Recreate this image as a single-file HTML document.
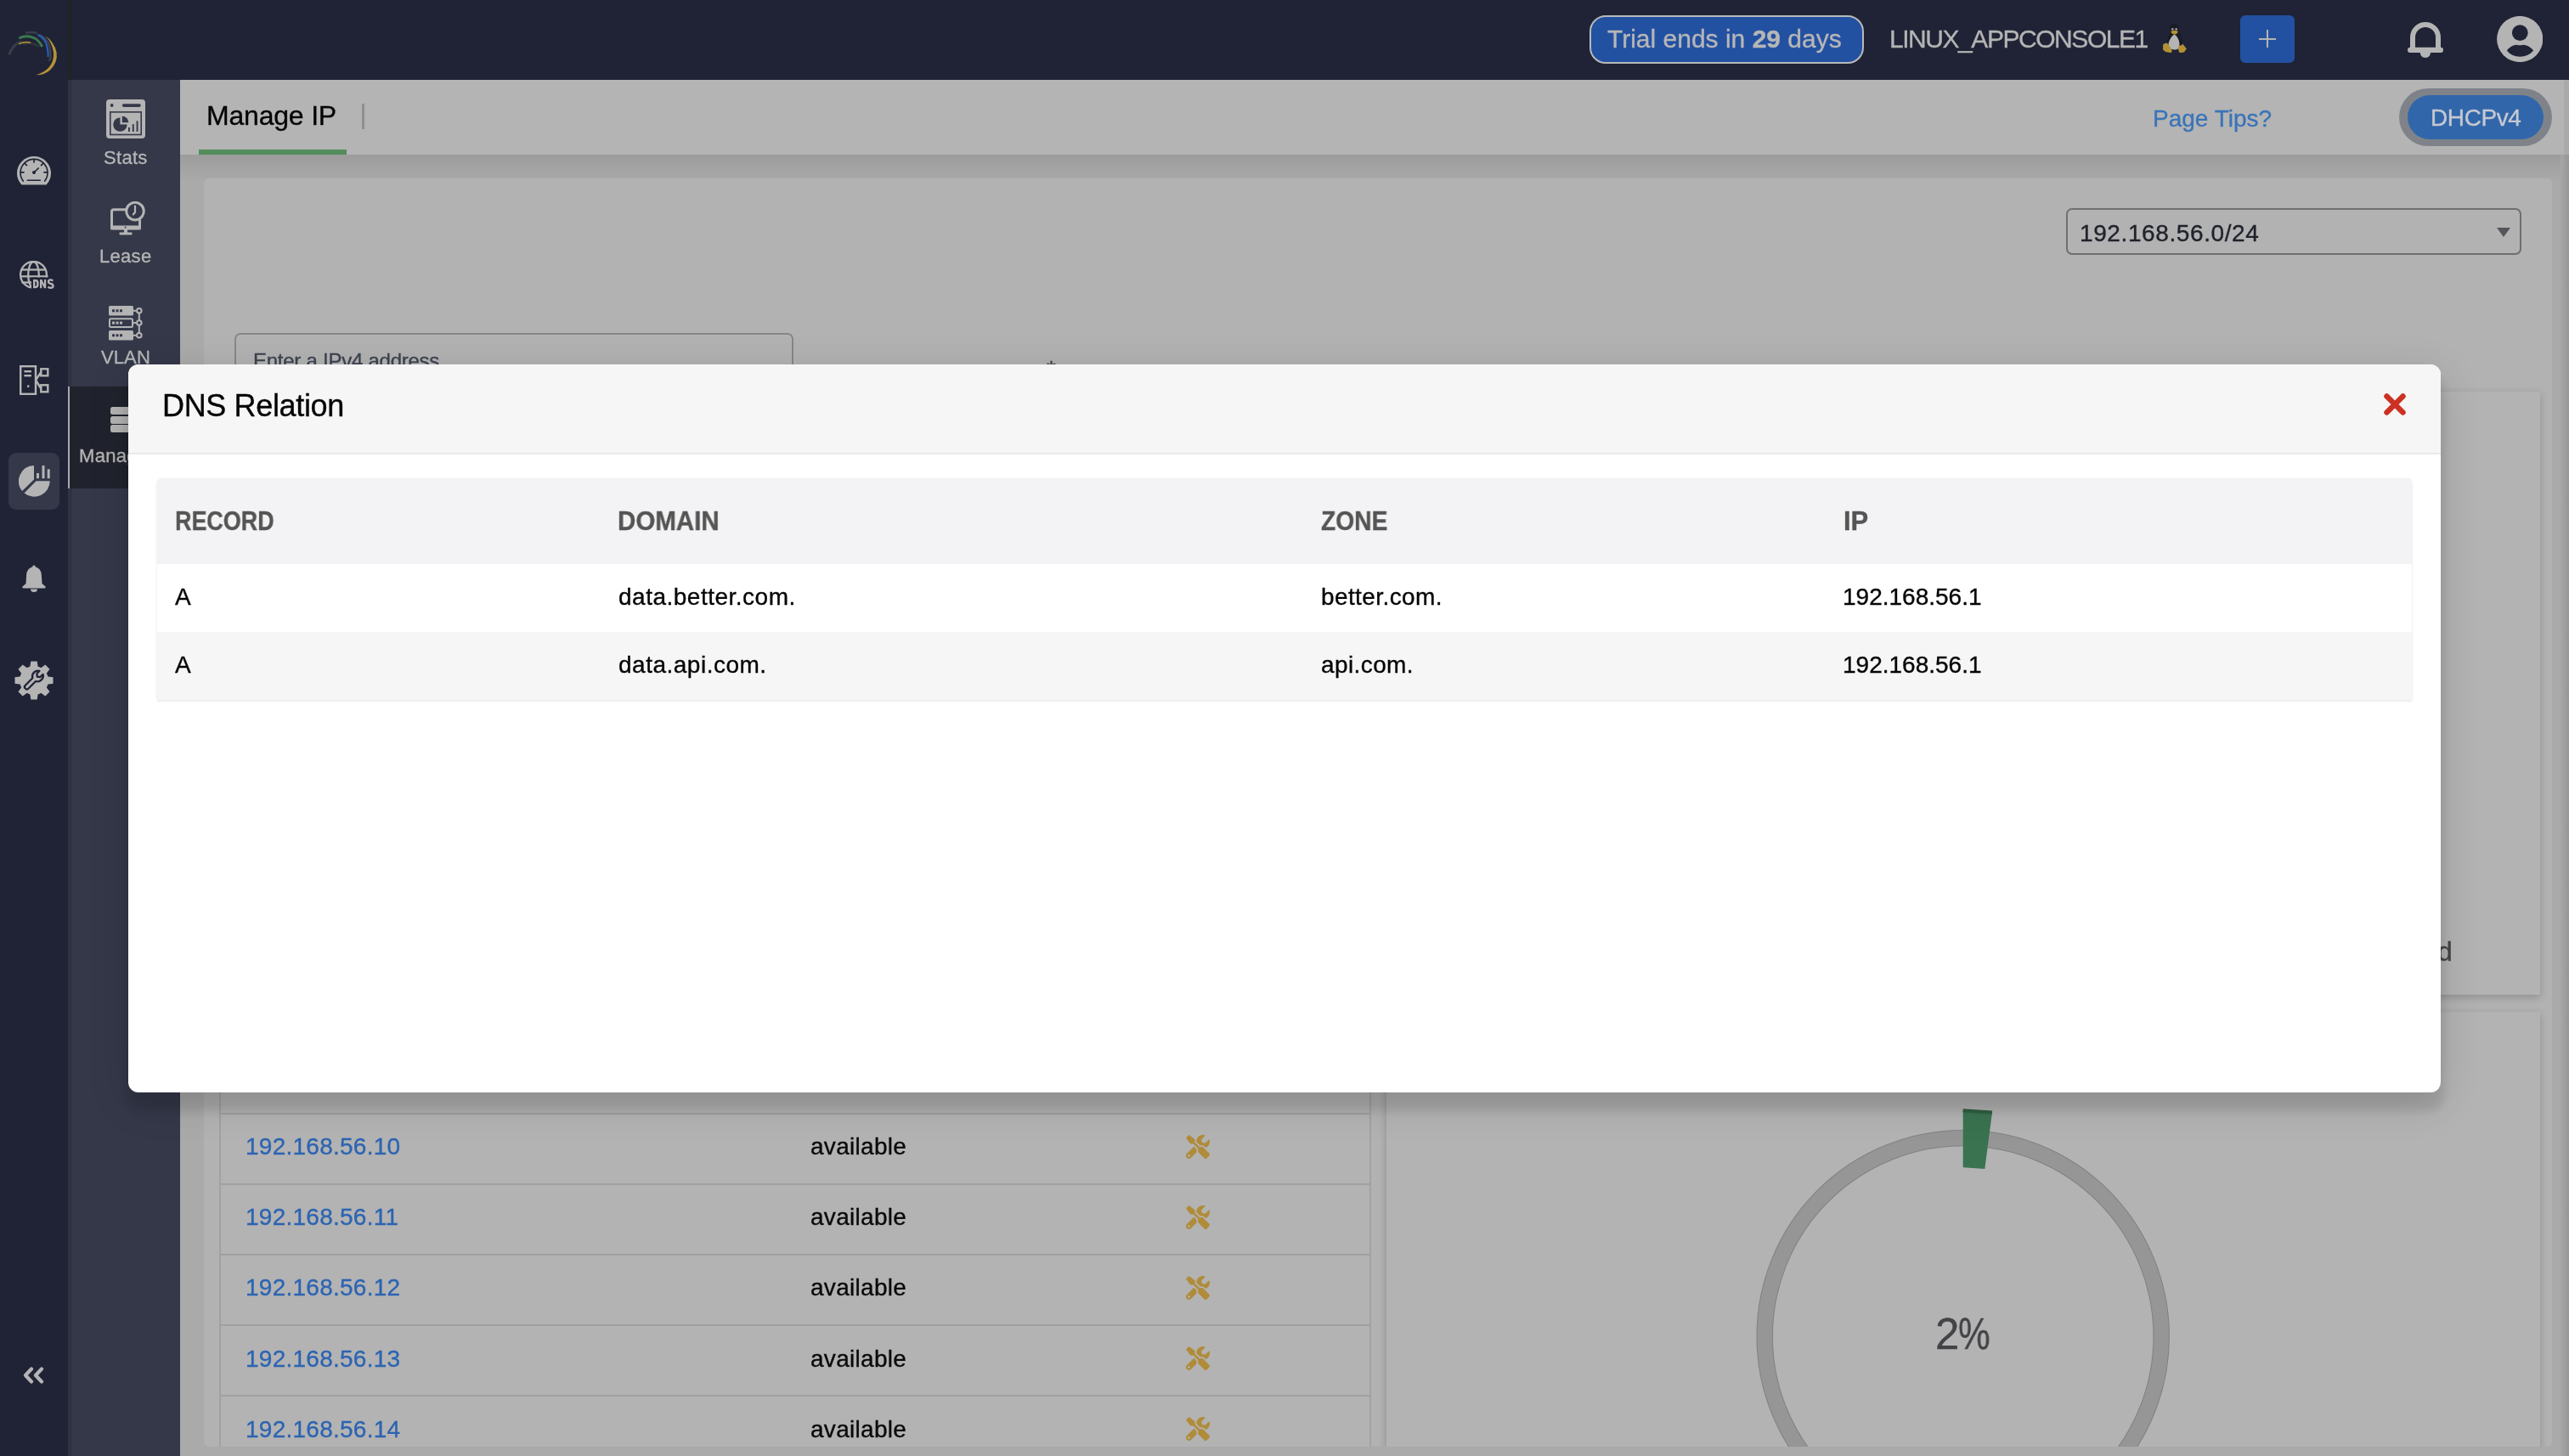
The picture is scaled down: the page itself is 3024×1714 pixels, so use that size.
<!DOCTYPE html>
<html><head><meta charset="utf-8"><title>Manage IP - DNS Relation</title>
<style>
html,body{margin:0;padding:0;width:3024px;height:1714px;overflow:hidden;background:#a9a9a9;}
body{position:relative;font-family:"Liberation Sans",sans-serif;}
.r{position:absolute;display:block;}
.t{position:absolute;line-height:1;white-space:pre;-webkit-text-stroke:0.35px currentColor;will-change:transform;}
</style></head><body>
<div class="r" style="left:0px;top:0px;width:3024px;height:1714px;background:#aaaaaa;"></div><div class="r" style="left:0px;top:0px;width:3024px;height:94px;background:#1f2335;"></div><div class="r" style="left:80px;top:0px;width:5px;height:94px;background:#212329;"></div><div class="r" style="left:0px;top:94px;width:80px;height:1620px;background:#1f2335;"></div><div class="r" style="left:80px;top:94px;width:132px;height:1620px;background:#343849;"></div><div class="r" style="left:80px;top:94px;width:5px;height:1620px;background:#2f3242;"></div><div class="r" style="left:212px;top:94px;width:2812px;height:88px;background:#b4b4b4;"></div><div class="r" style="left:212px;top:182px;width:2812px;height:30px;background:linear-gradient(#9c9c9c,#a9a9a9);"></div><div class="r" style="left:3014px;top:182px;width:10px;height:1532px;background:linear-gradient(90deg,#a7a7a7,#969696);"></div><div class="r" style="left:3018px;top:94px;width:6px;height:88px;background:#aaaaaa;"></div><div class="t" style="left:243px;top:120.4px;font-size:32px;color:#050505;font-weight:400;letter-spacing:-0.2px;">Manage IP</div><div class="r" style="left:426px;top:122px;width:3px;height:30px;background:#8f8f8f;"></div><div class="r" style="left:234px;top:176px;width:174px;height:6px;background:#538c5d;"></div><div class="t" style="left:2534px;top:126.4px;font-size:28px;color:#3a74b8;font-weight:400;letter-spacing:0px;">Page Tips?</div><div class="r" style="left:2824px;top:104px;width:180px;height:68px;background:#7f8389;border-radius:34px"></div><div class="r" style="left:2834px;top:112px;width:160px;height:52px;background:#3166aa;border-radius:26px"></div><div class="t" style="left:2861px;top:124.7px;font-size:28px;color:#c4c8d0;font-weight:400;letter-spacing:-0.4px;">DHCPv4</div><div class="r" style="left:240px;top:210px;width:2764px;height:1493px;background:#b2b2b2;border-radius:6px"></div><div class="r" style="left:2432px;top:245px;width:536px;height:55px;background:transparent;border:2px solid #6f6f6f;border-radius:7px;box-sizing:border-box"></div><div class="t" style="left:2448px;top:260.6px;font-size:28px;color:#20222c;font-weight:400;letter-spacing:0.6px;">192.168.56.0/24</div><svg class="r" style="left:2939px;top:268px;" width="16" height="11" viewBox="0 0 16 11"><path d="M0 0H16L8 11Z" fill="#55565c"/></svg><div class="r" style="left:276px;top:392px;width:658px;height:78px;background:transparent;border:2px solid #878787;border-radius:7px;box-sizing:border-box"></div><div class="t" style="left:297.8px;top:413.4px;font-size:24px;color:#3d4350;font-weight:400;letter-spacing:-0.25px;">Enter a IPv4 address</div><div class="t" style="left:1232px;top:421.2px;font-size:28px;color:#444;font-weight:400;letter-spacing:0px;">*</div><div class="r" style="left:1632px;top:461px;width:1358px;height:710px;background:#b3b3b3;box-shadow:0 3px 9px rgba(0,0,0,0.2)"></div><div class="t" style="left:2869px;top:1103.8px;font-size:32px;color:#45454a;font-weight:400;letter-spacing:0px;">d</div><div class="r" style="left:1632px;top:1191px;width:1358px;height:539px;background:#b3b3b3;box-shadow:0 3px 9px rgba(0,0,0,0.2)"></div><svg class="r" style="left:1632px;top:1191px;" width="1358" height="512" viewBox="0 0 1358 512"><circle cx="678.6999999999998" cy="382.20000000000005" r="233.5" fill="none" stroke="#7f8185" stroke-width="19.5"/><circle cx="678.6999999999998" cy="382.20000000000005" r="233.5" fill="none" stroke="#969696" stroke-width="17.5"/><path d="M678.7 116.2 L713.0 118.4 L704.3 184.9 L678.7 183.2Z" fill="#3a7350"/><path d="M678.7 116.2 L713.0 118.4" stroke="#2f5f42" stroke-width="4"/></svg><div class="t" style="left:2277.5px;top:1545.1px;font-size:51px;color:#434347;font-weight:400;letter-spacing:0px;">2</div><div class="t" style="left:2305px;top:1545.1px;font-size:51px;color:#434347;font-weight:400;letter-spacing:0px;transform:scaleX(0.83);transform-origin:0 0;">%</div><div class="r" style="left:258px;top:1150px;width:1356px;height:580px;background:#b3b3b3;border-left:2px solid #a2a2a2;border-right:2px solid #a2a2a2;box-sizing:border-box"></div><div class="r" style="left:258px;top:1310px;width:1356px;height:2px;background:#a0a0a0;"></div><div class="t" style="left:289px;top:1336.2px;font-size:28px;color:#2c64b2;font-weight:400;letter-spacing:0.25px;">192.168.56.10</div><div class="t" style="left:954px;top:1336.2px;font-size:28px;color:#0a0a0a;font-weight:400;letter-spacing:0.3px;">available</div><svg class="r" style="left:1396px;top:1336px;" width="28" height="28" viewBox="0 0 512 512"><path fill="#b08c3a" d="M501.1 395.7L384 278.6c-23.1-23.1-57.6-27.6-85.4-13.9L192 158.1V96L64 0 0 64l96 128h62.1l106.6 106.6c-13.6 27.8-9.2 62.3 13.9 85.4l117.1 117.1c14.6 14.6 38.2 14.6 52.7 0l52.7-52.7c14.5-14.6 14.5-38.2 0-52.7zM331.7 225c28.3 0 54.9 11 74.9 31l19.4 19.4c15.8-6.9 30.8-16.5 43.8-29.5 37.1-37.1 49.7-89.3 37.9-136.7-2.2-9-13.5-12.1-20.1-5.5l-74.4 74.4-67.9-11.3L334 98.9l74.4-74.4c6.6-6.6 3.4-17.9-5.7-20.2-47.4-11.7-99.6.9-136.6 37.9-28.5 28.5-41.9 66.1-41.2 103.6l82.1 82.1c8.1-1.9 16.5-2.9 24.7-2.9zm-103.9 82l-56.7-56.7L18.7 402.8c-25 25-25 65.5 0 90.5s65.5 25 90.5 0l123.6-123.6c-7.6-19.9-9.9-41.6-5-62.7zM64 472c-13.2 0-24-10.8-24-24 0-13.3 10.7-24 24-24s24 10.7 24 24c0 13.2-10.7 24-24 24z"/></svg><div class="r" style="left:258px;top:1393px;width:1356px;height:2px;background:#a0a0a0;"></div><div class="t" style="left:289px;top:1419.3px;font-size:28px;color:#2c64b2;font-weight:400;letter-spacing:0.25px;">192.168.56.11</div><div class="t" style="left:954px;top:1419.3px;font-size:28px;color:#0a0a0a;font-weight:400;letter-spacing:0.3px;">available</div><svg class="r" style="left:1396px;top:1419px;" width="28" height="28" viewBox="0 0 512 512"><path fill="#b08c3a" d="M501.1 395.7L384 278.6c-23.1-23.1-57.6-27.6-85.4-13.9L192 158.1V96L64 0 0 64l96 128h62.1l106.6 106.6c-13.6 27.8-9.2 62.3 13.9 85.4l117.1 117.1c14.6 14.6 38.2 14.6 52.7 0l52.7-52.7c14.5-14.6 14.5-38.2 0-52.7zM331.7 225c28.3 0 54.9 11 74.9 31l19.4 19.4c15.8-6.9 30.8-16.5 43.8-29.5 37.1-37.1 49.7-89.3 37.9-136.7-2.2-9-13.5-12.1-20.1-5.5l-74.4 74.4-67.9-11.3L334 98.9l74.4-74.4c6.6-6.6 3.4-17.9-5.7-20.2-47.4-11.7-99.6.9-136.6 37.9-28.5 28.5-41.9 66.1-41.2 103.6l82.1 82.1c8.1-1.9 16.5-2.9 24.7-2.9zm-103.9 82l-56.7-56.7L18.7 402.8c-25 25-25 65.5 0 90.5s65.5 25 90.5 0l123.6-123.6c-7.6-19.9-9.9-41.6-5-62.7zM64 472c-13.2 0-24-10.8-24-24 0-13.3 10.7-24 24-24s24 10.7 24 24c0 13.2-10.7 24-24 24z"/></svg><div class="r" style="left:258px;top:1476px;width:1356px;height:2px;background:#a0a0a0;"></div><div class="t" style="left:289px;top:1502.4px;font-size:28px;color:#2c64b2;font-weight:400;letter-spacing:0.25px;">192.168.56.12</div><div class="t" style="left:954px;top:1502.4px;font-size:28px;color:#0a0a0a;font-weight:400;letter-spacing:0.3px;">available</div><svg class="r" style="left:1396px;top:1502px;" width="28" height="28" viewBox="0 0 512 512"><path fill="#b08c3a" d="M501.1 395.7L384 278.6c-23.1-23.1-57.6-27.6-85.4-13.9L192 158.1V96L64 0 0 64l96 128h62.1l106.6 106.6c-13.6 27.8-9.2 62.3 13.9 85.4l117.1 117.1c14.6 14.6 38.2 14.6 52.7 0l52.7-52.7c14.5-14.6 14.5-38.2 0-52.7zM331.7 225c28.3 0 54.9 11 74.9 31l19.4 19.4c15.8-6.9 30.8-16.5 43.8-29.5 37.1-37.1 49.7-89.3 37.9-136.7-2.2-9-13.5-12.1-20.1-5.5l-74.4 74.4-67.9-11.3L334 98.9l74.4-74.4c6.6-6.6 3.4-17.9-5.7-20.2-47.4-11.7-99.6.9-136.6 37.9-28.5 28.5-41.9 66.1-41.2 103.6l82.1 82.1c8.1-1.9 16.5-2.9 24.7-2.9zm-103.9 82l-56.7-56.7L18.7 402.8c-25 25-25 65.5 0 90.5s65.5 25 90.5 0l123.6-123.6c-7.6-19.9-9.9-41.6-5-62.7zM64 472c-13.2 0-24-10.8-24-24 0-13.3 10.7-24 24-24s24 10.7 24 24c0 13.2-10.7 24-24 24z"/></svg><div class="r" style="left:258px;top:1559px;width:1356px;height:2px;background:#a0a0a0;"></div><div class="t" style="left:289px;top:1585.5px;font-size:28px;color:#2c64b2;font-weight:400;letter-spacing:0.25px;">192.168.56.13</div><div class="t" style="left:954px;top:1585.5px;font-size:28px;color:#0a0a0a;font-weight:400;letter-spacing:0.3px;">available</div><svg class="r" style="left:1396px;top:1585px;" width="28" height="28" viewBox="0 0 512 512"><path fill="#b08c3a" d="M501.1 395.7L384 278.6c-23.1-23.1-57.6-27.6-85.4-13.9L192 158.1V96L64 0 0 64l96 128h62.1l106.6 106.6c-13.6 27.8-9.2 62.3 13.9 85.4l117.1 117.1c14.6 14.6 38.2 14.6 52.7 0l52.7-52.7c14.5-14.6 14.5-38.2 0-52.7zM331.7 225c28.3 0 54.9 11 74.9 31l19.4 19.4c15.8-6.9 30.8-16.5 43.8-29.5 37.1-37.1 49.7-89.3 37.9-136.7-2.2-9-13.5-12.1-20.1-5.5l-74.4 74.4-67.9-11.3L334 98.9l74.4-74.4c6.6-6.6 3.4-17.9-5.7-20.2-47.4-11.7-99.6.9-136.6 37.9-28.5 28.5-41.9 66.1-41.2 103.6l82.1 82.1c8.1-1.9 16.5-2.9 24.7-2.9zm-103.9 82l-56.7-56.7L18.7 402.8c-25 25-25 65.5 0 90.5s65.5 25 90.5 0l123.6-123.6c-7.6-19.9-9.9-41.6-5-62.7zM64 472c-13.2 0-24-10.8-24-24 0-13.3 10.7-24 24-24s24 10.7 24 24c0 13.2-10.7 24-24 24z"/></svg><div class="r" style="left:258px;top:1642px;width:1356px;height:2px;background:#a0a0a0;"></div><div class="t" style="left:289px;top:1668.6px;font-size:28px;color:#2c64b2;font-weight:400;letter-spacing:0.25px;">192.168.56.14</div><div class="t" style="left:954px;top:1668.6px;font-size:28px;color:#0a0a0a;font-weight:400;letter-spacing:0.3px;">available</div><svg class="r" style="left:1396px;top:1668px;" width="28" height="28" viewBox="0 0 512 512"><path fill="#b08c3a" d="M501.1 395.7L384 278.6c-23.1-23.1-57.6-27.6-85.4-13.9L192 158.1V96L64 0 0 64l96 128h62.1l106.6 106.6c-13.6 27.8-9.2 62.3 13.9 85.4l117.1 117.1c14.6 14.6 38.2 14.6 52.7 0l52.7-52.7c14.5-14.6 14.5-38.2 0-52.7zM331.7 225c28.3 0 54.9 11 74.9 31l19.4 19.4c15.8-6.9 30.8-16.5 43.8-29.5 37.1-37.1 49.7-89.3 37.9-136.7-2.2-9-13.5-12.1-20.1-5.5l-74.4 74.4-67.9-11.3L334 98.9l74.4-74.4c6.6-6.6 3.4-17.9-5.7-20.2-47.4-11.7-99.6.9-136.6 37.9-28.5 28.5-41.9 66.1-41.2 103.6l82.1 82.1c8.1-1.9 16.5-2.9 24.7-2.9zm-103.9 82l-56.7-56.7L18.7 402.8c-25 25-25 65.5 0 90.5s65.5 25 90.5 0l123.6-123.6c-7.6-19.9-9.9-41.6-5-62.7zM64 472c-13.2 0-24-10.8-24-24 0-13.3 10.7-24 24-24s24 10.7 24 24c0 13.2-10.7 24-24 24z"/></svg><div class="r" style="left:212px;top:1703px;width:2802px;height:11px;background:#aaaaaa;"></div><svg class="r" style="left:125px;top:117px;" width="46" height="46" viewBox="0 0 46 46"><rect x="0" y="0" width="46" height="46" rx="4" fill="#b4b4b4"/><circle cx="6.7" cy="7" r="1.9" fill="#343849"/><rect x="18.8" y="5.3" width="22" height="3.6" rx="1.8" fill="#343849"/><rect x="4.8" y="14.9" width="36.4" height="26.6" fill="none" stroke="#343849" stroke-width="1.6"/><path d="M16.4 21.4 A8.2 8.2 0 1 0 24.6 29.6 L16.4 29.6Z" fill="#343849"/><path d="M18.8 19.7 A7.6 7.6 0 0 1 26.4 27.3 L18.8 27.3Z" fill="#343849"/><rect x="26" y="33" width="1.9" height="5" fill="#343849"/><rect x="30.8" y="29.2" width="1.9" height="8.8" fill="#343849"/><rect x="35.6" y="25.4" width="1.9" height="12.6" fill="#343849"/></svg><div class="t" style="left:122px;top:175.3px;font-size:22px;color:#b4b4b4;font-weight:400;letter-spacing:0.3px;">Stats</div><svg class="r" style="left:130px;top:237px;" width="42" height="41" viewBox="0 0 42 41"><rect x="1.5" y="9.7" width="33" height="22" rx="2.5" fill="none" stroke="#b4b4b4" stroke-width="3"/><rect x="0" y="28.5" width="36" height="5" rx="1.5" fill="#b4b4b4"/><circle cx="17.6" cy="30.4" r="1" fill="#343849"/><rect x="16" y="33" width="4" height="4" fill="#b4b4b4"/><rect x="10.5" y="36.4" width="15" height="3" rx="1.2" fill="#b4b4b4"/><circle cx="29" cy="11.6" r="10.3" fill="#343849" stroke="#b4b4b4" stroke-width="3"/><path d="M29 5.5 V12.8 L26.8 15.5" fill="none" stroke="#b4b4b4" stroke-width="2.2" stroke-linecap="round"/></svg><div class="t" style="left:117px;top:290.5px;font-size:22px;color:#b4b4b4;font-weight:400;letter-spacing:0.3px;">Lease</div><svg class="r" style="left:128px;top:360px;" width="40" height="41" viewBox="0 0 40 41"><rect x="0" y="0" width="29" height="11.5" rx="1.5" fill="#b4b4b4"/><rect x="4" y="4.3" width="3" height="3" fill="#343849"/><rect x="8.5" y="4.3" width="3" height="3" fill="#343849"/><rect x="13" y="4.3" width="3" height="3" fill="#343849"/><rect x="28" y="4.8" width="4" height="2" fill="#b4b4b4"/><circle cx="35.8" cy="5.7" r="2.8" fill="#343849" stroke="#b4b4b4" stroke-width="2"/><rect x="1" y="15.3" width="27" height="9.7" rx="1.5" fill="none" stroke="#b4b4b4" stroke-width="2"/><rect x="4" y="18.6" width="3" height="3" fill="#b4b4b4"/><rect x="8.5" y="18.6" width="3" height="3" fill="#b4b4b4"/><rect x="13" y="18.6" width="3" height="3" fill="#b4b4b4"/><rect x="28" y="19.1" width="4" height="2" fill="#b4b4b4"/><circle cx="35.8" cy="20.0" r="2.8" fill="#343849" stroke="#b4b4b4" stroke-width="2"/><rect x="0" y="29" width="29" height="11.5" rx="1.5" fill="#b4b4b4"/><rect x="4" y="33.3" width="3" height="3" fill="#343849"/><rect x="8.5" y="33.3" width="3" height="3" fill="#343849"/><rect x="13" y="33.3" width="3" height="3" fill="#343849"/><rect x="28" y="33.8" width="4" height="2" fill="#b4b4b4"/><circle cx="35.8" cy="34.7" r="2.8" fill="#343849" stroke="#b4b4b4" stroke-width="2"/><rect x="34.8" y="8.5" width="2" height="9" fill="#b4b4b4"/><rect x="34.8" y="23" width="2" height="9" fill="#b4b4b4"/></svg><div class="t" style="left:119px;top:410.3px;font-size:22px;color:#b4b4b4;font-weight:400;letter-spacing:0.1px;">VLAN</div><div class="r" style="left:80px;top:455px;width:132px;height:120px;background:#20232d;"></div><div class="r" style="left:80px;top:455px;width:2px;height:120px;background:#a9a9a9;"></div><div class="r" style="left:130px;top:479px;width:45px;height:9px;background:#b4b4b4;border-radius:2.5px"></div><div class="r" style="left:130px;top:490px;width:45px;height:9px;background:#b4b4b4;border-radius:2.5px"></div><div class="r" style="left:130px;top:500px;width:45px;height:9px;background:#b4b4b4;border-radius:2.5px"></div><div class="t" style="left:92.6px;top:526.3px;font-size:22px;color:#b4b4b4;font-weight:400;letter-spacing:0.3px;">Manage</div><svg class="r" style="left:0px;top:0px;" width="80" height="94" viewBox="0 0 80 94"><path d="M10.7 64.5 Q14.5 53 24.7 48.8" fill="none" stroke="#3a3d48" stroke-width="3"/><path d="M30 38.8 Q37 37 44 39.2" fill="none" stroke="#3b3f4c" stroke-width="2.6"/><path d="M46 40.8 Q54 44 57.5 52 Q60 58 59.5 68 L57.5 72" fill="none" stroke="#3e4350" stroke-width="2.2"/><path d="M22.2 44.9 Q33 40 42.8 46.1 Q47 49.5 49.8 55" fill="none" stroke="#3a7a4c" stroke-width="2.8"/><path d="M27 52 Q38 49 46 55" fill="none" stroke="#33363f" stroke-width="2.5"/><path d="M44.3 41 Q51 44 53.8 50 Q57 57.5 56.6 67" fill="none" stroke="#2a5fbb" stroke-width="2.1"/><path d="M22.2 51.8 Q29 48.5 36.2 50.3" fill="none" stroke="#a88a3a" stroke-width="1.6"/><path d="M53.5 42.3 Q63.5 49 66.6 61.5 Q68.3 74 58.5 83 Q51 88.8 42.5 88.2 Q51 85.8 57 80 Q63.8 72.5 63 62 Q61.5 50.5 53.5 42.3 Z" fill="#b4923a"/></svg><svg class="r" style="left:20px;top:183px;" width="40" height="36" viewBox="0 0 40 36"><path d="M5.4 34.6 A20 20 0 1 1 34.6 34.6 Z" fill="#b4b4b4"/><path d="M7.4 30.2 A16 16 0 1 1 32.6 30.2" fill="none" stroke="#1f2335" stroke-width="1.6" stroke-linecap="round"/><g stroke="#1f2335" stroke-width="1.7" stroke-linecap="round"><path d="M20 4.5 V8"/><path d="M8.8 9 L11.5 11.6"/><path d="M31.2 9 L28.5 11.6"/><path d="M4.5 19.8 H8"/><path d="M35.5 19.8 H32"/></g><path d="M20 20 L25.2 15" stroke="#1f2335" stroke-width="1.7" stroke-linecap="round"/><circle cx="20" cy="20" r="2" fill="#1f2335"/><path d="M12.4 29.2 H27.4" stroke="#1f2335" stroke-width="1.6" stroke-linecap="round"/></svg><svg class="r" style="left:23px;top:307px;" width="42" height="36" viewBox="0 0 42 36"><g fill="none" stroke="#b4b4b4" stroke-width="2.3"><circle cx="16.5" cy="16.4" r="15.4"/><ellipse cx="16.5" cy="16.4" rx="6.3" ry="15.4"/><path d="M2.5 10.5 H30.5"/><path d="M1 18.3 H33.5"/><path d="M2.5 25.5 H30.5"/></g><rect x="14" y="19.6" width="28" height="17" fill="#1f2335"/><path fill-rule="evenodd" fill="#b4b4b4" d="M16 22 H19 Q22.7 22 22.7 27 Q22.7 32.2 19 32.2 H16 Z M18.4 24.2 H18.9 Q20.3 24.2 20.3 27 Q20.3 30 18.9 30 H18.4 Z"/><path fill="#b4b4b4" d="M24 22 H26.3 L29 27.5 V22 H31.2 V32.2 H29 L26.3 26.7 V32.2 H24 Z"/><path d="M39.3 23.6 Q38.2 22.4 36.6 22.4 Q34 22.4 34 24.8 Q34 26.4 36.6 27 Q39.5 27.6 39.5 29.5 Q39.5 31.9 36.7 31.9 Q34.9 31.9 33.7 30.6" fill="none" stroke="#b4b4b4" stroke-width="2.3"/></svg><svg class="r" style="left:23px;top:430px;" width="35" height="36" viewBox="0 0 35 36"><rect x="1.2" y="1.2" width="17.8" height="32.6" fill="none" stroke="#b4b4b4" stroke-width="2.4"/><rect x="5.4" y="6" width="8.5" height="2.4" fill="#b4b4b4"/><rect x="5.4" y="11" width="8.5" height="2.4" fill="#b4b4b4"/><rect x="9" y="23.5" width="2.4" height="2.4" fill="#b4b4b4"/><rect x="25.3" y="4.3" width="8" height="8" fill="none" stroke="#b4b4b4" stroke-width="2.4"/><rect x="25.3" y="23.3" width="8" height="8" fill="none" stroke="#b4b4b4" stroke-width="2.4"/><path d="M19 17.5 L25 8.5 M19 17.5 L25 27" fill="none" stroke="#b4b4b4" stroke-width="2.4"/></svg><div class="r" style="left:10px;top:533px;width:60px;height:67px;background:#343849;border-radius:9px"></div><svg class="r" style="left:22px;top:548px;" width="38" height="38" viewBox="0 0 38 38"><path d="M18 0 A18.5 18.5 0 0 0 4 30 L18 16.5 Z" fill="#b4b4b4"/><path d="M36.7 18.3 A18.5 18.5 0 0 1 6.5 32.5 L20.5 18.3 Z" fill="#b4b4b4"/><rect x="21" y="9" width="3" height="6.2" fill="#b4b4b4"/><rect x="27.5" y="0" width="3" height="15.2" fill="#b4b4b4"/><rect x="33.7" y="4.3" width="3" height="10.9" fill="#b4b4b4"/></svg><svg class="r" style="left:26px;top:665px;" width="28" height="33" viewBox="0 0 28 33"><path d="M14 0.5 a1.6 1.6 0 0 1 1.6 1.8 C21 4 23 8 23 14 L23.5 22 L27.5 25.5 A1.3 1.3 0 0 1 26.5 27.5 H1.5 A1.3 1.3 0 0 1 0.5 25.5 L4.5 22 L5 14 C5 8 7 4 12.4 2.3 A1.6 1.6 0 0 1 14 0.5Z" fill="#b4b4b4"/><path d="M10 28.5 H18 A4 3.5 0 0 1 10 28.5Z" fill="#b4b4b4"/></svg><svg class="r" style="left:17px;top:778px;" width="46" height="46" viewBox="0 0 46 46"><path d="M18.2 8 L19.3 0.5 H26.7 L27.8 8 Z" fill="#b4b4b4" transform="rotate(0 23 23)"/><path d="M18.2 8 L19.3 0.5 H26.7 L27.8 8 Z" fill="#b4b4b4" transform="rotate(45 23 23)"/><path d="M18.2 8 L19.3 0.5 H26.7 L27.8 8 Z" fill="#b4b4b4" transform="rotate(90 23 23)"/><path d="M18.2 8 L19.3 0.5 H26.7 L27.8 8 Z" fill="#b4b4b4" transform="rotate(135 23 23)"/><path d="M18.2 8 L19.3 0.5 H26.7 L27.8 8 Z" fill="#b4b4b4" transform="rotate(180 23 23)"/><path d="M18.2 8 L19.3 0.5 H26.7 L27.8 8 Z" fill="#b4b4b4" transform="rotate(225 23 23)"/><path d="M18.2 8 L19.3 0.5 H26.7 L27.8 8 Z" fill="#b4b4b4" transform="rotate(270 23 23)"/><path d="M18.2 8 L19.3 0.5 H26.7 L27.8 8 Z" fill="#b4b4b4" transform="rotate(315 23 23)"/><circle cx="23" cy="23" r="17" fill="#b4b4b4"/><path d="M29.5 11.8 A6.8 6.8 0 0 0 21.3 20.3 L12.8 28.8 A2.6 2.6 0 0 0 16.5 32.5 L25 24 A6.8 6.8 0 0 0 33.6 15.8 L30.3 19 L26.8 18.6 L26.4 15 Z" fill="none" stroke="#1f2335" stroke-width="2.3" stroke-linejoin="round"/></svg><svg class="r" style="left:27px;top:1609px;" width="26" height="21" viewBox="0 0 26 21"><path d="M10 2.5 L3 10 L10 17.5 M22 2.5 L15 10 L22 17.5" fill="none" stroke="#b4b4b4" stroke-width="4.2" stroke-linecap="round" stroke-linejoin="round"/></svg><div class="r" style="left:1871px;top:18px;width:323px;height:57px;background:#2351a1;border:2px solid #b9b9b9;border-radius:19px;box-sizing:border-box"></div><div class="t" style="left:1892px;top:31.2px;font-size:30px;color:#b6b6b8;font-weight:400;letter-spacing:0px;">Trial ends in <b>29</b> days</div><div class="t" style="left:2224px;top:31.2px;font-size:30px;color:#b4b4b4;font-weight:400;letter-spacing:-1.45px;">LINUX_APPCONSOLE1</div><svg class="r" style="left:2546px;top:28px;" width="28" height="34" viewBox="0 0 28 34"><ellipse cx="13.6" cy="6.5" rx="5.2" ry="6.5" fill="#191c24"/><path d="M8.8 9 C5 16 3.5 24 5 31 H21.5 C24 27 23.5 16 18.5 9 Z" fill="#191c24"/><ellipse cx="11.4" cy="6.6" rx="1.2" ry="1.6" fill="#c4c4c4"/><ellipse cx="15.6" cy="6.6" rx="1.2" ry="1.6" fill="#c4c4c4"/><circle cx="11.7" cy="7.2" r="0.6" fill="#191c24"/><circle cx="15.3" cy="7.2" r="0.6" fill="#191c24"/><path d="M13.5 12.6 C9.5 15 5.5 22 6.5 27 C8 31 16 31.5 18.2 29 C20.5 26 20 17 13.5 12.6Z" fill="#b4b4b4"/><path d="M9 9.3 L11.8 8 H15.5 L18 9.3 L16.5 11.5 L14 12.8 L11 11.8 Z" fill="#b39136"/><path d="M0.2 24 L4.5 22.5 L8 26 L10.8 32 L9.5 34.2 L3 33 L0 30.5 Z" fill="#b39136"/><path d="M18.2 26 L22 25.2 L23 23.5 L27.8 29.3 L25 33.5 L19.5 34.2 L18 30 Z" fill="#b39136"/></svg><div class="r" style="left:2637px;top:18px;width:64px;height:56px;background:#2351a1;border-radius:6px"></div><div class="r" style="left:2659px;top:45px;width:20px;height:2px;background:#b4b4b4;"></div><div class="r" style="left:2668px;top:35px;width:2px;height:21px;background:#b4b4b4;"></div><svg class="r" style="left:2834px;top:25px;" width="42" height="44" viewBox="0 0 42 44"><path d="M6 31 V19 A15 15 0 0 1 36 19 V31" fill="none" stroke="#b4b4b4" stroke-width="6"/><rect x="0" y="30.8" width="42" height="6.1" rx="3" fill="#b4b4b4"/><path d="M14.8 36.5 H27 Q27 43 21 43 Q14.8 43 14.8 36.5Z" fill="#b4b4b4"/></svg><svg class="r" style="left:2939px;top:19px;" width="54" height="54" viewBox="0 0 54 54"><circle cx="27.2" cy="27" r="27.1" fill="#b4b4b4"/><circle cx="27.3" cy="19.6" r="9.4" fill="#1f2335"/><path d="M11.8 40.5 Q17 34 23.5 33.8 Q27.3 34.8 31 33.8 Q37.5 34 43.2 40.5 Q37 47.7 27.3 47.7 Q17.5 47.7 11.8 40.5Z" fill="#1f2335"/></svg>
<div class="r" style="left:151px;top:429px;width:2722px;height:857px;background:#ffffff;border-radius:12px;box-shadow:0 18px 12px 4px rgba(0,0,0,0.1), 0 12px 50px rgba(0,0,0,0.14);overflow:hidden"></div><div class="r" style="left:151px;top:429px;width:2722px;height:104px;background:#f6f6f6;border-radius:12px 12px 0 0"></div><div class="r" style="left:151px;top:533px;width:2722px;height:2px;background:#e9e9e9;"></div><div class="t" style="left:190.5px;top:460.4px;font-size:36px;color:#050505;font-weight:400;letter-spacing:-0.35px;">DNS Relation</div><svg class="r" style="left:2806px;top:463px;" width="26" height="26" viewBox="0 0 26 26"><path d="M3.5 3.5 L22.5 22.5 M22.5 3.5 L3.5 22.5" stroke="#cc3123" stroke-width="6.5" stroke-linecap="round"/></svg><div class="r" style="left:185px;top:563px;width:2654px;height:261px;background:#ffffff;border-radius:5px 5px 0 0;box-shadow:0 1px 3px rgba(0,0,0,0.13)"></div><div class="r" style="left:185px;top:563px;width:2654px;height:101px;background:#f3f3f5;border-radius:5px 5px 0 0"></div><div class="r" style="left:185px;top:744px;width:2654px;height:80px;background:#f6f6f6;"></div><div class="t" style="left:205.6px;top:597.9px;font-size:31px;color:#555555;font-weight:700;letter-spacing:0px;transform:scaleX(0.868);transform-origin:0 0;">RECORD</div><div class="t" style="left:726.8px;top:597.9px;font-size:31px;color:#555555;font-weight:700;letter-spacing:0px;transform:scaleX(0.952);transform-origin:0 0;">DOMAIN</div><div class="t" style="left:1554.8px;top:597.9px;font-size:31px;color:#555555;font-weight:700;letter-spacing:0px;transform:scaleX(0.91);transform-origin:0 0;">ZONE</div><div class="t" style="left:2169.5px;top:597.9px;font-size:31px;color:#555555;font-weight:700;letter-spacing:0px;transform:scaleX(1.0);transform-origin:0 0;">IP</div><div class="t" style="left:206px;top:689.0px;font-size:28px;color:#050505;font-weight:400;letter-spacing:0px;">A</div><div class="t" style="left:728px;top:689.0px;font-size:28px;color:#050505;font-weight:400;letter-spacing:0.5px;">data.better.com.</div><div class="t" style="left:1555px;top:689.0px;font-size:28px;color:#050505;font-weight:400;letter-spacing:0.4px;">better.com.</div><div class="t" style="left:2169px;top:689.0px;font-size:28px;color:#050505;font-weight:400;letter-spacing:0px;">192.168.56.1</div><div class="t" style="left:206px;top:768.8px;font-size:28px;color:#050505;font-weight:400;letter-spacing:0px;">A</div><div class="t" style="left:728px;top:768.8px;font-size:28px;color:#050505;font-weight:400;letter-spacing:0.5px;">data.api.com.</div><div class="t" style="left:1555px;top:768.8px;font-size:28px;color:#050505;font-weight:400;letter-spacing:0.4px;">api.com.</div><div class="t" style="left:2169px;top:768.8px;font-size:28px;color:#050505;font-weight:400;letter-spacing:0px;">192.168.56.1</div>
</body></html>
